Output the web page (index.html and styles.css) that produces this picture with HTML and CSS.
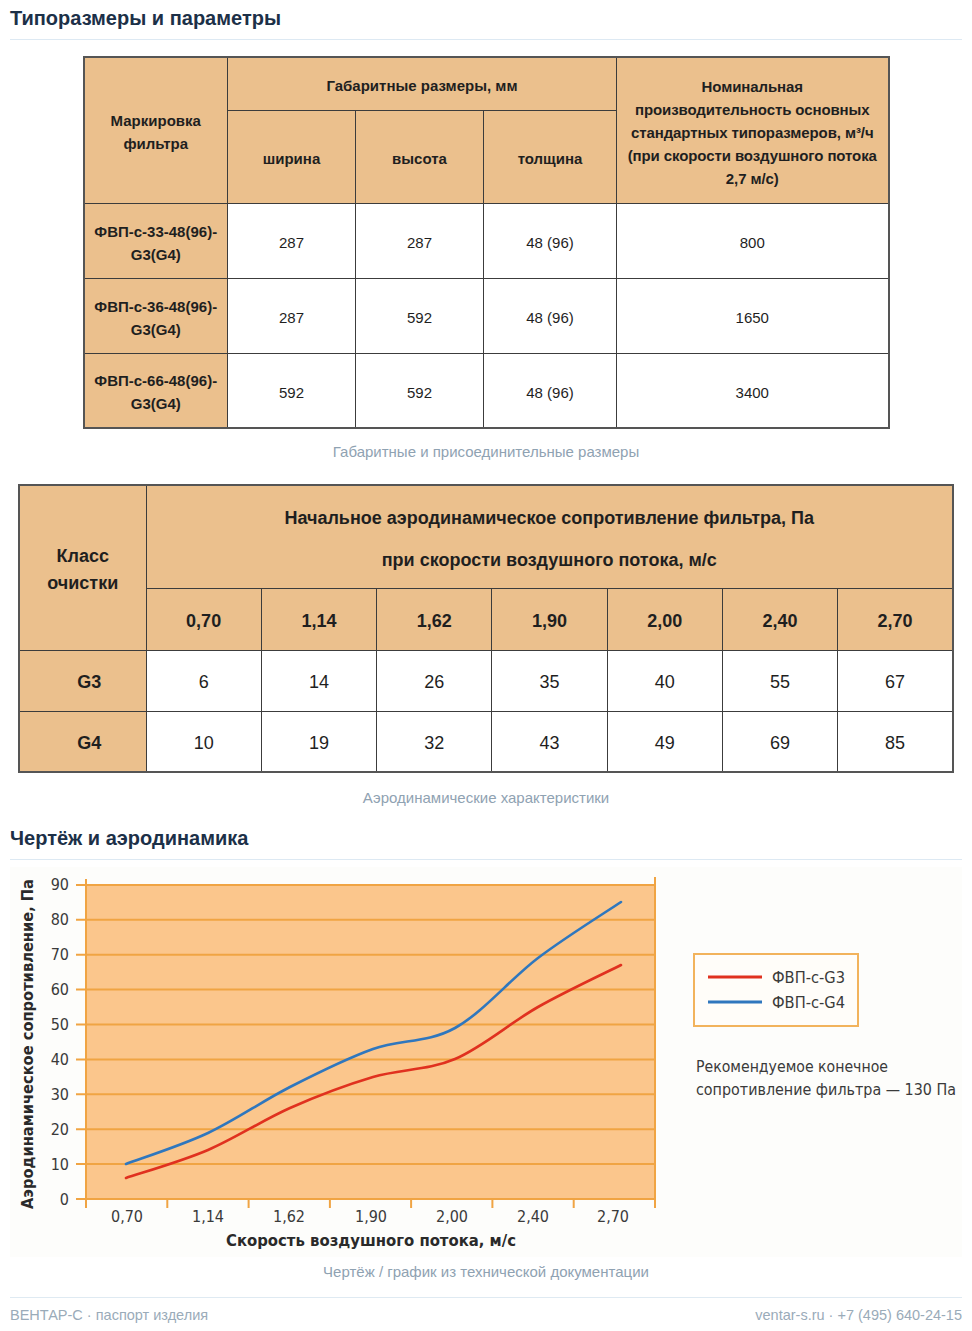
FILE: index.html
```html
<!DOCTYPE html>
<html lang="ru">
<head>
<meta charset="utf-8">
<title>ФВП-с — типоразмеры и параметры</title>
<link rel="stylesheet" href="styles.css">
</head>
<body>
<h2 class="sec-title">Типоразмеры и параметры</h2>

<table class="t1">
  <colgroup>
    <col class="t1-c1"><col class="t1-c2"><col class="t1-c3"><col class="t1-c4"><col class="t1-c5">
  </colgroup>
  <tr class="t1-h1">
    <th rowspan="2" class="hd">Маркировка<br>фильтра</th>
    <th colspan="3" class="hd">Габаритные размеры, мм</th>
    <th rowspan="2" class="hd t1-nom">Номинальная<br>производительность основных<br>стандартных типоразмеров, м³/ч<br>(при скорости воздушного потока<br>2,7 м/с)</th>
  </tr>
  <tr class="t1-h2">
    <th class="hd">ширина</th>
    <th class="hd">высота</th>
    <th class="hd">толщина</th>
  </tr>
  <tr class="t1-row">
    <th class="hd">ФВП-с-33-48(96)-<br>G3(G4)</th>
    <td>287</td><td>287</td><td>48 (96)</td><td>800</td>
  </tr>
  <tr class="t1-row">
    <th class="hd">ФВП-с-36-48(96)-<br>G3(G4)</th>
    <td>287</td><td>592</td><td>48 (96)</td><td>1650</td>
  </tr>
  <tr class="t1-row">
    <th class="hd">ФВП-с-66-48(96)-<br>G3(G4)</th>
    <td>592</td><td>592</td><td>48 (96)</td><td>3400</td>
  </tr>
</table>
<p class="cap cap-1">Габаритные и присоединительные размеры</p>

<table class="t2">
  <colgroup>
    <col class="t2-c1"><col><col><col><col><col><col><col>
  </colgroup>
  <tr class="t2-h1">
    <th rowspan="2" class="hd t2-class">Класс<br>очистки</th>
    <th colspan="7" class="hd t2-title">Начальное аэродинамическое сопротивление фильтра, Па<br>при скорости воздушного потока, м/с</th>
  </tr>
  <tr class="t2-h2">
    <th class="hd">0,70</th><th class="hd">1,14</th><th class="hd">1,62</th><th class="hd">1,90</th><th class="hd">2,00</th><th class="hd">2,40</th><th class="hd">2,70</th>
  </tr>
  <tr class="t2-row">
    <th class="hd t2-g">G3</th>
    <td>6</td><td>14</td><td>26</td><td>35</td><td>40</td><td>55</td><td>67</td>
  </tr>
  <tr class="t2-row">
    <th class="hd t2-g">G4</th>
    <td>10</td><td>19</td><td>32</td><td>43</td><td>49</td><td>69</td><td>85</td>
  </tr>
</table>
<p class="cap cap-2">Аэродинамические характеристики</p>

<h2 class="sec-title">Чертёж и аэродинамика</h2>

<svg class="chart" viewBox="10 866 952 390" width="952" height="390" xmlns="http://www.w3.org/2000/svg">
  <rect x="10" y="866" width="952" height="390" fill="#fdfdfb"/>
  <rect x="86" y="884" width="569" height="314" fill="#fbc68c"/>
  <g class="grid">
    <line x1="76" y1="1198" x2="655" y2="1198"/>
    <line x1="76" y1="1163.1" x2="655" y2="1163.1"/>
    <line x1="76" y1="1128.2" x2="655" y2="1128.2"/>
    <line x1="76" y1="1093.3" x2="655" y2="1093.3"/>
    <line x1="76" y1="1058.4" x2="655" y2="1058.4"/>
    <line x1="76" y1="1023.5" x2="655" y2="1023.5"/>
    <line x1="76" y1="988.6" x2="655" y2="988.6"/>
    <line x1="76" y1="953.7" x2="655" y2="953.7"/>
    <line x1="76" y1="918.8" x2="655" y2="918.8"/>
    <line x1="76" y1="883.9" x2="655" y2="883.9"/>
    <line x1="86" y1="878" x2="86" y2="1207"/>
    <line x1="655" y1="876" x2="655" y2="1207"/>
    <line x1="167.3" y1="1198" x2="167.3" y2="1207"/>
    <line x1="248.6" y1="1198" x2="248.6" y2="1207"/>
    <line x1="329.9" y1="1198" x2="329.9" y2="1207"/>
    <line x1="411.1" y1="1198" x2="411.1" y2="1207"/>
    <line x1="492.4" y1="1198" x2="492.4" y2="1207"/>
    <line x1="573.7" y1="1198" x2="573.7" y2="1207"/>
  </g>
  <path class="curve-g3" d="M126,1177 C139.7,1172.3 180.7,1160.7 208,1149 C235.3,1137.3 262.5,1119.2 290,1107 C317.5,1094.8 345.5,1084.2 373,1076 C400.5,1067.8 427.5,1069.7 455,1058 C482.5,1046.3 510.3,1021.7 538,1006 C565.7,990.3 607.2,971 621,964"/>
  <path class="curve-g4" d="M126,1163 C139.7,1157.8 180.7,1144.8 208,1132 C235.3,1119.2 262.5,1100 290,1086 C317.5,1072 345.5,1057.8 373,1048 C400.5,1038.2 427.5,1042.2 455,1027 C482.5,1011.8 510.3,978 538,957 C565.7,936 607.2,910.3 621,901"/>

  <g class="ct ylab">
    <text x="69" y="1203.5">0</text>
    <text x="69" y="1168.6">10</text>
    <text x="69" y="1133.7">20</text>
    <text x="69" y="1098.8">30</text>
    <text x="69" y="1063.9">40</text>
    <text x="69" y="1029">50</text>
    <text x="69" y="994.1">60</text>
    <text x="69" y="959.2">70</text>
    <text x="69" y="924.3">80</text>
    <text x="69" y="889.4">90</text>
  </g>
  <g class="ct xlab">
    <text x="127" y="1221">0,70</text>
    <text x="208" y="1221">1,14</text>
    <text x="289" y="1221">1,62</text>
    <text x="371" y="1221">1,90</text>
    <text x="452" y="1221">2,00</text>
    <text x="533" y="1221">2,40</text>
    <text x="613" y="1221">2,70</text>
  </g>
  <text class="ct ctb" x="371" y="1245" text-anchor="middle" textLength="290" lengthAdjust="spacingAndGlyphs">Скорость воздушного потока, м/с</text>
  <text class="ct ctb" transform="translate(33 1043) rotate(-90)" x="0" y="0" text-anchor="middle" textLength="330" lengthAdjust="spacingAndGlyphs">Аэродинамическое сопротивление, Па</text>

  <rect x="694" y="953" width="164" height="72" fill="#fffdf9" stroke="#f2b35c" stroke-width="2"/>
  <line x1="708" y1="976" x2="762" y2="976" class="leg-g3"/>
  <line x1="708" y1="1001" x2="762" y2="1001" class="leg-g4"/>
  <text class="ct ctl" x="772" y="981.5" textLength="73" lengthAdjust="spacingAndGlyphs">ФВП-с-G3</text>
  <text class="ct ctl" x="772" y="1006.5" textLength="73" lengthAdjust="spacingAndGlyphs">ФВП-с-G4</text>
  <text class="ct ctl" x="696" y="1070.5" textLength="192" lengthAdjust="spacingAndGlyphs">Рекомендуемое конечное</text>
  <text class="ct ctl" x="696" y="1093.5" textLength="260" lengthAdjust="spacingAndGlyphs">сопротивление фильтра — 130 Па</text>
</svg>
<p class="cap cap-3">Чертёж / график из технической документации</p>

<footer class="foot">
  <span>ВЕНТАР-С · паспорт изделия</span>
  <span>ventar-s.ru · +7 (495) 640-24-15</span>
</footer>
</body>
</html>
```

FILE: styles.css
```css
* { box-sizing: border-box; }

body {
  margin: 0;
  padding: 0 10px;
  background: #ffffff;
  color: #222222;
  font-family: "Liberation Sans", Arial, sans-serif;
}

.sec-title {
  margin: 0;
  padding: 7px 0 10px;
  font-size: 20px;
  line-height: 22px;
  font-weight: 700;
  color: #1c3048;
  border-bottom: 1px solid #dde9f3;
}

/* ---------- tables ---------- */
.t1, .t2 {
  border-collapse: collapse;
  table-layout: fixed;
  margin: 0 auto;
  border: 2px solid #555555;
}

.t1 th, .t1 td, .t2 th, .t2 td {
  border: 1px solid #3c3c3c;
  text-align: center;
  vertical-align: middle;
  color: #1f1f1f;
}

.hd {
  background: #ebc08d;
  font-weight: 700;
}

.t1 {
  margin-top: 16px;
  width: 805px;
  font-size: 15px;
  line-height: 23px;
}
.t1 th, .t1 td { padding: 4px 2px 0; }
.t1 .t1-nom { white-space: nowrap; letter-spacing: -0.1px; }
.t1-c1 { width: 144px; }
.t1-c2 { width: 128px; }
.t1-c3 { width: 128px; }
.t1-c4 { width: 133px; }
.t1-c5 { width: 272px; }
.t1-h1 { height: 53px; }
.t1-h2 { height: 93px; }
.t1-row { height: 75px; }

.t2 {
  width: 936px;
  font-size: 18px;
  line-height: 27px;
}
.t2 th, .t2 td { padding: 4px 2px 0; }
.t2-c1 { width: 127px; }
.t2-h1 { height: 103px; }
.t2-h2 { height: 62px; }
.t2-row { height: 61px; }
.t2-title { line-height: 42px; }
.t2-g { padding-left: 15px !important; }

/* ---------- captions ---------- */
.cap {
  margin: 0;
  text-align: center;
  font-size: 15px;
  line-height: 18px;
  color: #8fa2b2;
}
.cap-1 { margin: 14px 0 23px; }
.cap-2 { margin: 16px 0 13px; }
.cap-3 { margin: 6px 0 16px; }

/* ---------- chart ---------- */
.chart {
  display: block;
  margin-top: 7px;
}
.grid line {
  stroke: #f0a443;
  stroke-width: 2;
}
.curve-g3, .curve-g4 {
  fill: none;
  stroke-width: 2.6;
  stroke-linecap: round;
}
.curve-g3 { stroke: #e0311f; }
.curve-g4 { stroke: #2f77be; }
.leg-g3, .leg-g4 { stroke-width: 3; }
.leg-g3 { stroke: #e0311f; }
.leg-g4 { stroke: #2f77be; }

.ct {
  font-family: "DejaVu Sans Condensed", "DejaVu Sans", sans-serif;
  font-stretch: condensed;
  font-size: 16px;
  fill: #3a3a3a;
}
.ylab text { text-anchor: end; }
.xlab text { text-anchor: middle; }
.ctb {
  font-weight: 700;
  fill: #2a2a2a;
}
.ctl {
  font-size: 15px;
}

/* ---------- footer ---------- */
.foot {
  display: flex;
  justify-content: space-between;
  border-top: 1px solid #dfeaf2;
  padding: 8px 0;
  font-size: 14.5px;
  line-height: 18px;
  color: #9aabb9;
}
```
